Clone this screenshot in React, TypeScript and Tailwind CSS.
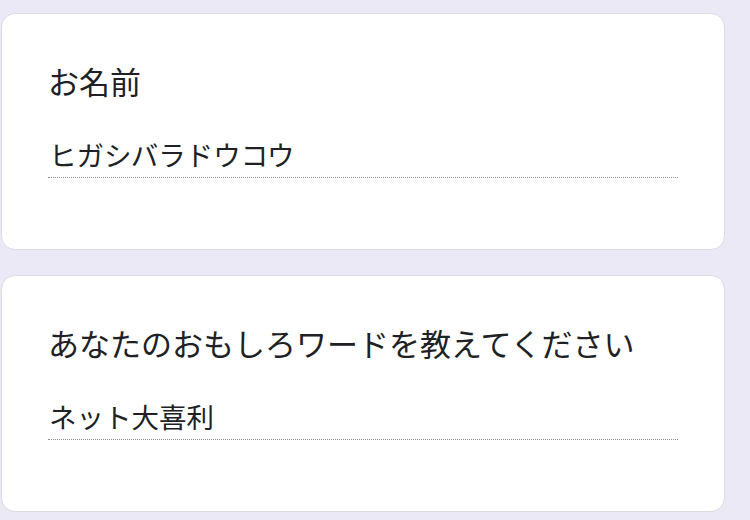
import React from 'react';

const questions = [
  { title: 'お名前', answer: 'ヒガシバラドウコウ' },
  { title: 'あなたのおもしろワードを教えてください', answer: 'ネット大喜利' },
];

const QuestionCard: React.FC<{ title: string; answer: string }> = ({ title, answer }) => (
  <div className="w-[724px] rounded-[14px] border border-[#dadce0] bg-white pl-[46px] pt-[47px] pb-[71px]">
    <div className="h-[40px] text-[31px] leading-[40px] text-[#202124]">{title}</div>
    <div className="mt-[35px] w-[630px] border-b border-dotted border-[#8f8f8f] pb-[5px]">
      <div className="h-[36px] pl-[1px] text-[27.5px] leading-[36px] text-[#202124]">{answer}</div>
    </div>
  </div>
);

export default function App() {
  return (
    <div
      className="flex h-[520px] w-[750px] flex-col gap-[25px] overflow-hidden bg-[#ebe9f5] pl-[1px] pt-[13px]"
      style={{ fontFamily: '"Noto Sans CJK JP", "Noto Sans", sans-serif' }}
    >
      {questions.map((q) => (
        <QuestionCard key={q.title} title={q.title} answer={q.answer} />
      ))}
    </div>
  );
}
